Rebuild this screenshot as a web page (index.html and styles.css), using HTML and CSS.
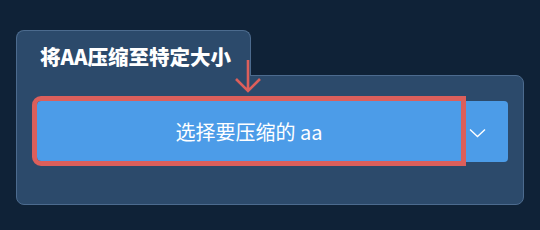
FILE: index.html
```html
<!DOCTYPE html>
<html lang="zh-CN">
<head>
  <meta charset="UTF-8">
  <meta name="viewport" content="width=device-width, initial-scale=1.0">
  <link rel="stylesheet" href="styles.css">
  <title>压缩</title>
</head>
<body>
  <div class="panel">
    <div class="tab">
      <h1>将AA压缩至特定大小</h1>
    </div>
    <div class="card">
      <div class="split">
        <button class="main-btn">选择要压缩的 aa</button>
        <button class="drop-btn">
          <svg width="17" height="10" viewBox="0 0 17 10"><path d="M1 1.5 L8.5 8.5 L16 1.5" fill="none" stroke="#fff" stroke-width="1.4"/></svg>
        </button>
      </div>
    </div>
    <svg class="hint-arrow" width="28" height="36" viewBox="0 0 28 36"><path d="M13 1 V32 M1 20 L13 32 L25 20" fill="none" stroke="#dc5f5b" stroke-width="2.6"/></svg>
  </div>
</body>
</html>
```

FILE: styles.css
```css
  body {
    margin: 0;
    padding: 30px 16px 0;
    background-color: #0f2237;
    font-family: "Noto Sans CJK SC", "Noto Sans", sans-serif;
  }

  .panel {
    position: relative;
    width: 508px;
    display: flex;
    flex-direction: column;
  }

  .tab {
    position: relative;
    z-index: 1;
    width: 235px;
    height: 46px;
    margin-bottom: -1px;
    display: flex;
    align-items: center;
    padding-left: 23px;
    box-sizing: border-box;
    background-color: #2c4a6b;
    border: 1px solid #4c6b8e;
    border-bottom: none;
    border-radius: 8px 8px 0 0;
  }

  .tab h1 {
    margin: 0;
    padding-top: 4px;
    font-size: 20.5px;
    font-weight: 900;
    color: #fff;
  }

  .card {
    height: 130px;
    box-sizing: border-box;
    padding: 25px 15px 0 20px;
    background-color: #2c4a6b;
    border: 1px solid #4c6b8e;
    border-radius: 0 8px 8px 8px;
  }

  .split {
    display: flex;
    height: 60px;
  }

  .main-btn {
    width: 424px;
    height: 60px;
    margin: 0;
    padding: 0;
    border: none;
    border-radius: 4px 0 0 4px;
    background-color: #4c9ce8;
    color: #fff;
    font-family: inherit;
    font-size: 20px;
    outline: 5px solid #dc5f5b;
    position: relative;
    z-index: 1;
  }

  .drop-btn {
    flex: 1;
    height: 61px;
    margin: 0;
    padding: 2px 0 0 8px;
    display: flex;
    align-items: center;
    border: none;
    border-radius: 0 4px 4px 0;
    background-color: #4c9ce8;
  }

  .hint-arrow {
    position: absolute;
    left: 219px;
    top: 29px;
    z-index: 2;
  }
```
